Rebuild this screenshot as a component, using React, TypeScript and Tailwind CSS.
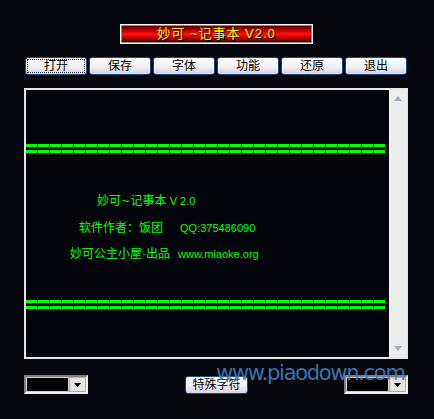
import React from 'react';

const buttons = ['打开', '保存', '字体', '功能', '还原', '退出'];

function DashLines() {
  // two rows of green "=" dashes
  return (
    <div className="flex flex-col gap-[3px] w-[360px]">
      <div className="h-[3px] bg-[repeating-linear-gradient(90deg,#00ff00_0_11px,transparent_11px_12px)]" />
      <div className="h-[3px] bg-[repeating-linear-gradient(90deg,#00ff00_0_11px,transparent_11px_12px)]" />
    </div>
  );
}

function Select() {
  return (
    <div className="flex w-[64px] h-[19px] border-2 border-t-[#808080] border-l-[#808080] border-b-[#f0f0f0] border-r-[#f0f0f0] bg-white">
      <div className="flex-1 bg-black border border-[#d4d0c8]" />
      <div className="w-[17px] bg-[#e4e4e4] border border-[#b0b0b0] flex items-center justify-center">
        <svg width="7" height="4" viewBox="0 0 7 4">
          <path d="M0 0h7L3.5 4z" fill="#000" />
        </svg>
      </div>
    </div>
  );
}

export default function App() {
  return (
    <div className="relative w-[434px] h-[419px] bg-[#05070d] overflow-hidden font-['Liberation_Sans','Noto_Sans_CJK_SC',sans-serif] text-[12px]">
      {/* Title */}
      <div className="ml-[120px] mt-[24px] w-[193px] h-[20px] border border-white p-[1px] bg-[#8a8a8a]">
        <div className="h-full bg-[linear-gradient(180deg,#5a0000_0%,#d80000_35%,#ff1010_50%,#c80000_70%,#4a0000_100%)] flex items-center justify-center text-[#ffff00] text-[13px] tracking-[1px] [text-shadow:1px_1px_0_#000]">
          妙可 ~记事本 V2.0
        </div>
      </div>

      {/* Toolbar */}
      <div className="ml-[25px] mt-[13px] flex gap-[2px]">
        {buttons.map((b, i) => (
          <div
            key={b}
            className="w-[62px] h-[18px] rounded-[3px] border border-[#1b4e86] bg-[linear-gradient(180deg,#ffffff_0%,#f2f2f6_50%,#d6d4e2_100%)] p-[1px]"
          >
            <div
              className={`h-full flex items-center justify-center text-black text-[12px] leading-none ${
                i === 0 ? 'border border-dotted border-[#333]' : ''
              }`}
            >
              {b}
            </div>
          </div>
        ))}
      </div>

      {/* Text area */}
      <div className="ml-[24px] mt-[13px] w-[384px] h-[271px] flex border-2 border-[#e6e6e6]">
        <div className="flex-1 bg-[#03050b] pt-[54px]">
          <DashLines />
          <div className="mt-[41px] text-[#00ff00] leading-[14px]">
            <div className="ml-[71px]">
              妙可<span className="text-[13px] mx-[1px]">~</span>记事本<span className="text-[11px]"> V 2.0</span>
            </div>
            <div className="ml-[53px] mt-[13px]">
              软件作者：饭团<span className="text-[11px] ml-[17px]">QQ:375486090</span>
            </div>
            <div className="ml-[44px] mt-[12px]">
              妙可公主小屋·出品<span className="text-[11px] ml-[8px]">www.miaoke.org</span>
            </div>
          </div>
          <div className="mt-[39px]">
            <DashLines />
          </div>
        </div>
        {/* Scrollbar */}
        <div className="w-[17px] bg-[#ececec] border-l border-[#f8f8f8] flex flex-col justify-between items-center py-[6px]">
          <svg width="8" height="5" viewBox="0 0 8 5">
            <path d="M4 0L8 5H0z" fill="#a8a8c8" />
          </svg>
          <svg width="8" height="5" viewBox="0 0 8 5">
            <path d="M0 0h8L4 5z" fill="#a8a8c8" />
          </svg>
        </div>
      </div>

      {/* Bottom row */}
      <div className="mt-[16px] ml-[24px] flex items-center">
        <Select />
        <div className="ml-[97px] w-[63px] h-[18px] rounded-[3px] border border-[#1b4e86] bg-[linear-gradient(180deg,#ffffff_0%,#f2f2f6_50%,#d6d4e2_100%)] flex items-center justify-center text-black text-[12px]">
          特殊字符
        </div>
        <div className="ml-[96px]">
          <Select />
        </div>
      </div>

      {/* Watermark */}
      <div className="absolute left-[216px] top-[363px] leading-none text-[21px] text-[#3f7fc0] font-['DejaVu_Sans',sans-serif] tracking-[-1.3px] opacity-90">
        www.piaodown.com
      </div>
    </div>
  );
}
